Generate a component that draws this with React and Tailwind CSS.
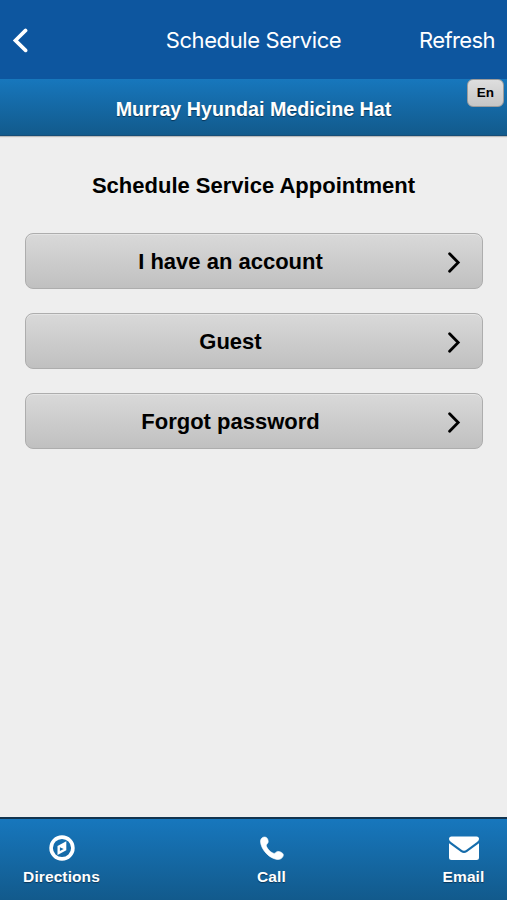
import React from 'react';

const menuItems = ['I have an account', 'Guest', 'Forgot password'];

const ChevronLeft = () => (
  <svg className="h-[26px] w-[17px]" viewBox="0 0 17 26" fill="none" stroke="white" strokeWidth="3.6" strokeLinecap="round" strokeLinejoin="miter">
    <path d="M13.6 2.400 3.400 12.400l10.200 10" />
  </svg>
);

const ChevronRight = () => (
  <svg className="h-[21px] w-[13px]" viewBox="0 0 13 21" fill="none" stroke="black" strokeWidth="2.8" strokeLinecap="round">
    <path d="M1.6 1.7 10.2 10.5 1.6 19.3" />
  </svg>
);

const CompassIcon = () => (
  <svg className="h-[26px] w-[26px]" viewBox="0 0 26 26" fill="white">
    <circle cx="13" cy="13" r="10.9" fill="none" stroke="white" strokeWidth="3.6" />
    <path fillRule="evenodd" d="M8.5 10.9 17.3 6.3v9l-8.8 4.6zM10.9 12.2v3.9l3.800-2z" />
  </svg>
);

const PhoneIcon = () => (
  <svg className="h-[24px] w-[24px]" viewBox="0 0 24 24" fill="white" stroke="white" strokeWidth="0.6">
    <path d="M.5 5C.5 2.500 3 .8 5 1c2.200.200 3.400 3 3.200 5-.2 1.600-2 2.200-1.900 3.600.3 2.800 4.900 7.400 7.700 7.800 1.400.2 2-1.800 3.600-2 2-.2 5.400 1.200 5.700 3.200.3 2.400-2.300 4.900-4.900 4.900C10 23.500.5 13.500.5 5z" />
  </svg>
);

const EnvelopeIcon = () => (
  <svg className="h-[24px] w-[30px]" viewBox="0 0 30 24" fill="white">
    <path d="M0 3Q0 .5 2.500.5h25Q30 .5 30 3q0 1.500-2 3l-10.500 7.800q-2.500 1.700-5 0L2 6Q0 4.500 0 3z" />
    <path d="M0 7.200 12 16q3 2 6 0l12-8.800v14.300q0 2.500-2.500 2.500h-25Q0 24 0 21.500z" />
  </svg>
);

// Bottom bar tab
const Tab = ({ label, className, children }) => (
  <button className={`flex flex-col items-center ${className}`}>
    <span className="flex h-[30px] items-center">{children}</span>
    <span className="mt-[4px] text-[15.5px] leading-[20px] font-bold tracking-[0.1px] whitespace-nowrap text-white [text-shadow:0_1px_1px_#0a3557]">{label}</span>
  </button>
);

const App = () => {
  return (
    <div className="flex h-[900px] w-[507px] flex-col overflow-hidden bg-[#eeeeee] font-['Liberation_Sans',Arial,sans-serif] text-black">
      {/* Navigation bar */}
      <header className="grid h-[79px] grid-cols-[1fr_auto_1fr] items-center bg-[#0d569f] pt-[2px] pr-[12px] pl-[12px] font-[Inter,sans-serif] text-[22px] text-white">
        <button className="justify-self-start" aria-label="Back">
          <ChevronLeft />
        </button>
        <h1 className="text-[22px] tracking-[-0.4px] whitespace-nowrap">Schedule Service</h1>
        <button className="justify-self-end tracking-[-0.6px]">Refresh</button>
      </header>

      {/* Dealer name */}
      <div className="relative flex h-[57px] items-center justify-center border-b border-[#174d76] bg-linear-to-b from-[#1777bd] to-[#125a8c] pt-[5px] shadow-[0_1px_1px_#bbb]">
        <h2 className="text-[19.7px] font-bold whitespace-nowrap text-white [text-shadow:0_1px_1px_#0a3557]">Murray Hyundai Medicine Hat</h2>
        <button className="absolute top-0 right-[3px] h-[28px] w-[37px] rounded-[6px] border border-[#9c9c9c] bg-linear-to-b from-[#dedede] to-[#c6c6c6] text-[13.5px] font-bold">En</button>
      </div>

      <main className="flex flex-1 flex-col px-[25px] pt-[34px]">
        <h3 className="text-center text-[22px] leading-[32px] font-bold whitespace-nowrap">Schedule Service Appointment</h3>
        <div className="mt-[31px] flex flex-col gap-[24px]">
          {menuItems.map((item) => (
            <button key={item} className="flex h-[56px] w-[458px] items-center rounded-[8px] border-[1.5px] border-[#adadad] bg-linear-to-b from-[#d9d9d9] to-[#c0c0c0] pr-[21px] shadow-[inset_0_1px_0_#e4e4e4]">
              <span className="flex-1 pt-[1px] pr-[13px] text-center text-[22px] font-bold">{item}</span>
              <span className="pt-[3px]"><ChevronRight /></span>
            </button>
          ))}
        </div>
      </main>

      {/* Bottom bar */}
      <footer className="flex h-[83px] items-start justify-between border-t-2 border-[#12344f] bg-linear-to-b from-[#1777bd] to-[#125a8c] pt-[14px] pr-[22px] pl-[22px]">
        <Tab label="Directions" className="w-[79px]"><CompassIcon /></Tab>
        <Tab label="Call" className="w-[30px]"><PhoneIcon /></Tab>
        <Tab label="Email" className="w-[43px]"><EnvelopeIcon /></Tab>
      </footer>
    </div>
  );
};

export default App;
